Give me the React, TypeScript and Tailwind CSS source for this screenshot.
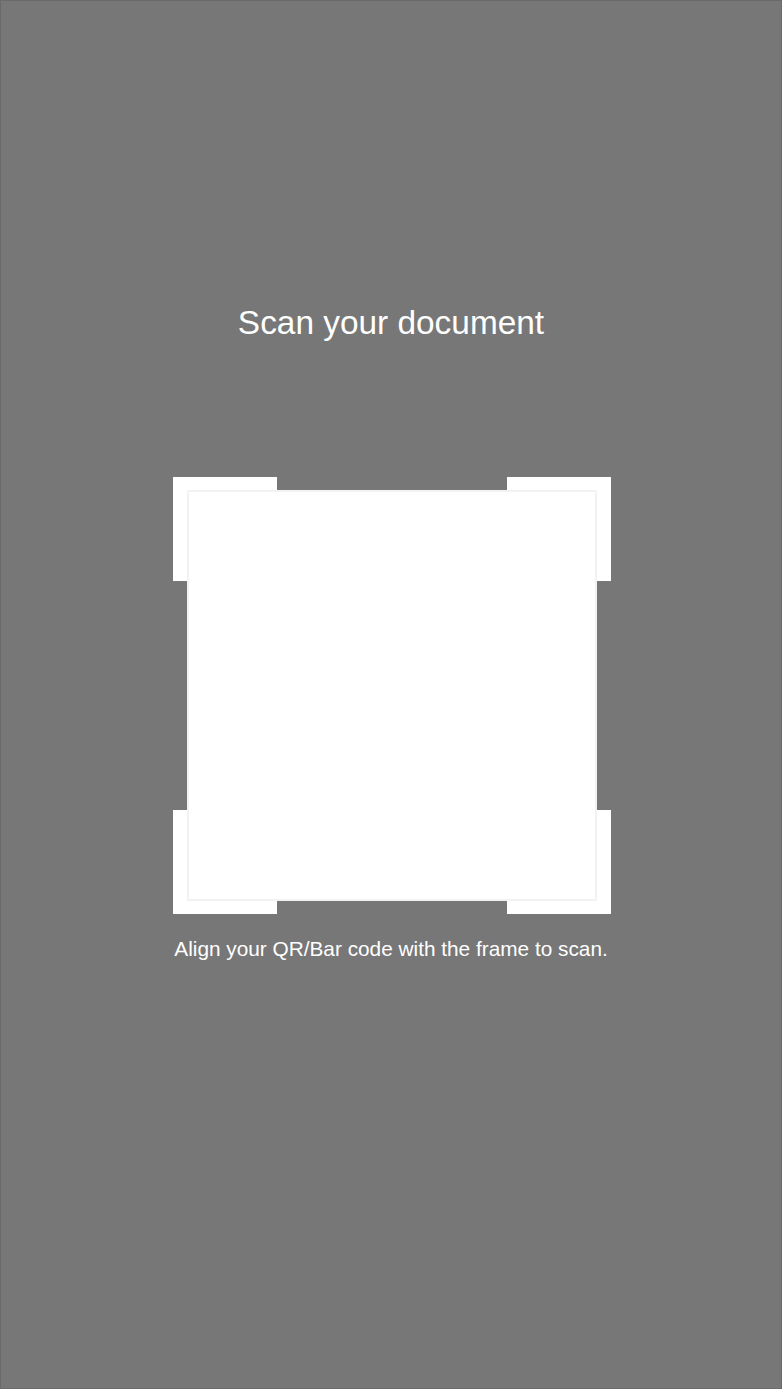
const corners = [
  "top-0 left-0",
  "top-0 right-0",
  "bottom-0 left-0",
  "bottom-0 right-0",
];

export default function App() {
  return (
    <div
      className="flex h-[1389px] w-full flex-col items-center border border-[#6a6a6a] bg-[#777777] text-white"
      style={{ fontFamily: '"Liberation Sans", Arial, sans-serif' }}
    >
      <h1 className="mt-[305px] text-[33.4px] leading-[33px] font-normal">
        Scan your document
      </h1>

      {/* scan frame */}
      <div className="relative ml-[2px] mt-[138px] h-[437px] w-[438px] px-[14px] py-[13px]">
        {corners.map((pos) => (
          <div key={pos} className={`absolute h-[104px] w-[104px] bg-white ${pos}`} />
        ))}
        <div className="relative z-10 h-full w-full rounded-[2px] border-2 border-[#f2f2f2] bg-white" />
      </div>

      <p className="mt-[24px] text-[20.8px] leading-[21px]">
        Align your QR/Bar code with the frame to scan.
      </p>
    </div>
  );
}
